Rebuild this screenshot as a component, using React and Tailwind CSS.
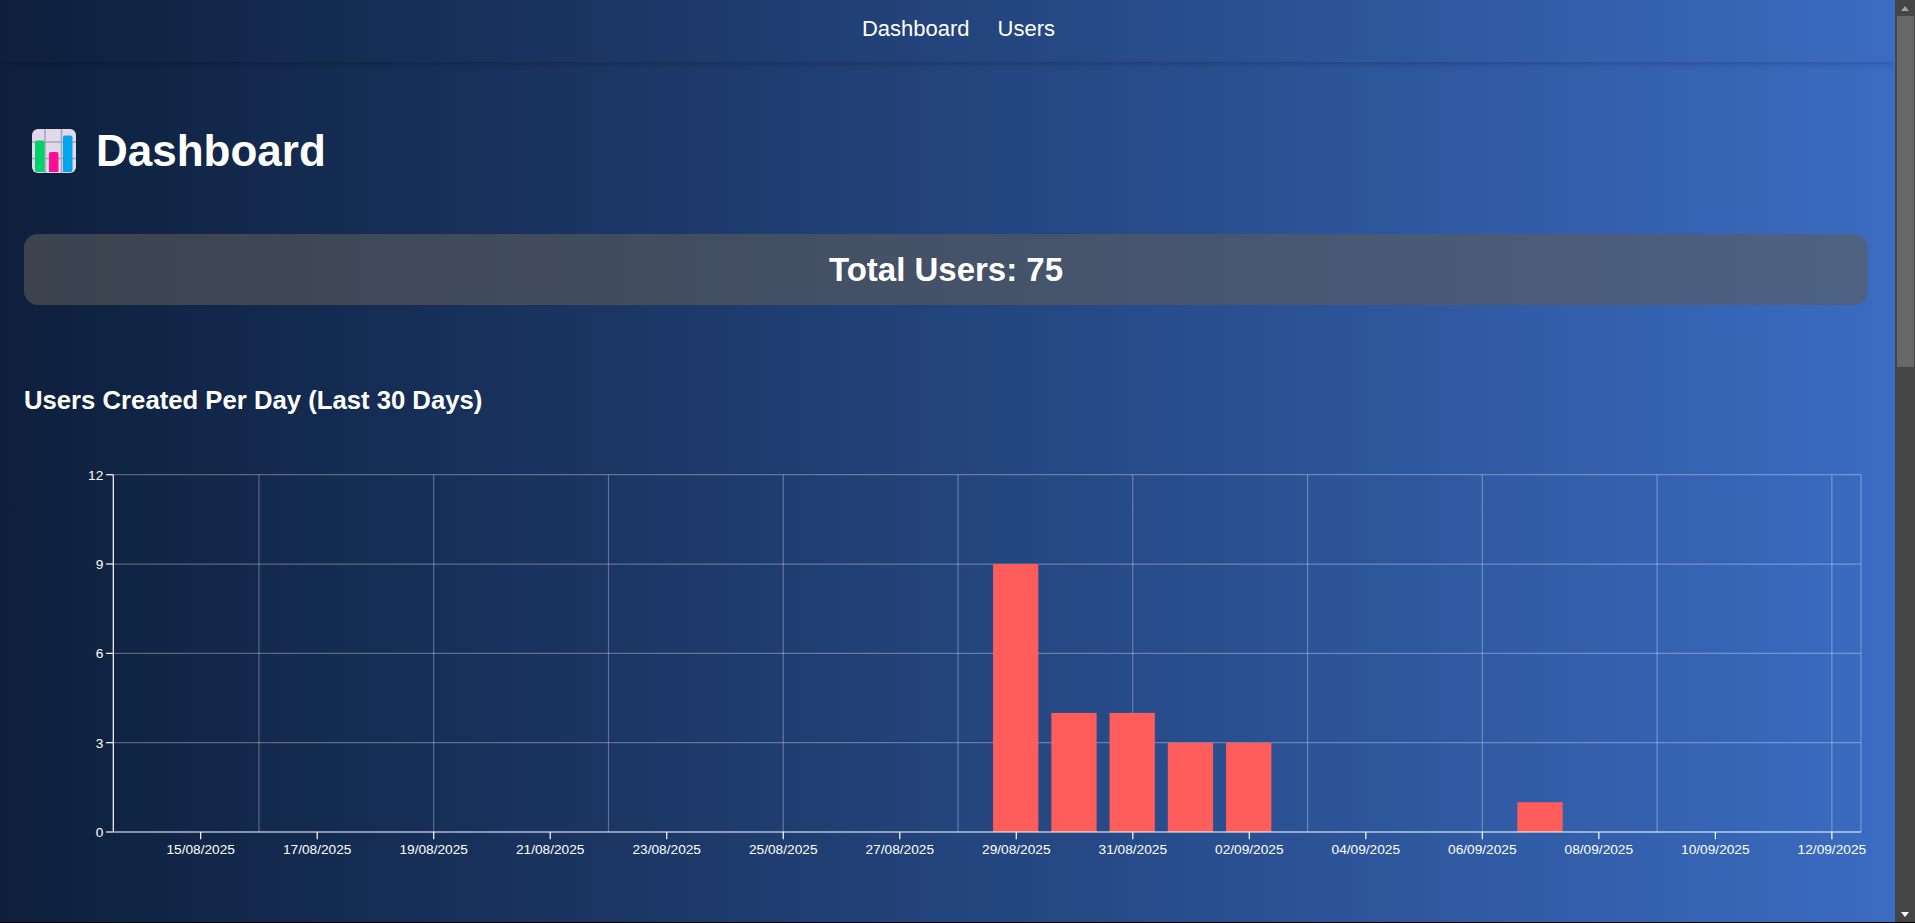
import React from "react";

const LEFT = 113.3;
const RIGHT = 1861;
const TOP = 7.7;
const BOTTOM = 365;
const BAND = (RIGHT - LEFT) / 30;
const ROW = (BOTTOM - TOP) / 4;

const dates = [
  "15/08/2025", "17/08/2025", "19/08/2025", "21/08/2025", "23/08/2025", "25/08/2025", "27/08/2025", "29/08/2025",
  "31/08/2025", "02/09/2025", "04/09/2025", "06/09/2025", "08/09/2025", "10/09/2025", "12/09/2025",
];

const bars = [
  { band: 15, value: 9 },
  { band: 16, value: 4 },
  { band: 17, value: 4 },
  { band: 18, value: 3 },
  { band: 19, value: 3 },
  { band: 24, value: 1 },
];

const gridX = [2, 5, 8, 11, 14, 17, 20, 23, 26, 29];

const ChartIcon = () => (
  <svg width="44" height="44" viewBox="0 0 44 44" className="shrink-0">
    <rect x="0" y="0" width="44" height="44" rx="6" fill="#e1d8ec" />
    <path d="M13 0V44M29.5 0V44M0 13H44M0 29.5H44" stroke="#a9a3b6" strokeWidth="1.6" />
    <path d="M3 13.5a2 2 0 0 1 2-2h5.5a2 2 0 0 1 2 2V43H5a2 2 0 0 1-2-2z" fill="#00d26a" />
    <path d="M17 25a2 2 0 0 1 2-2h5.5a2 2 0 0 1 2 2V43H17z" fill="#ff0e93" />
    <path d="M31 8.500a2 2 0 0 1 2-2h5.500a2 2 0 0 1 2 2V41a2 2 0 0 1-2 2H31z" fill="#00a6ed" />
  </svg>
);

const UsersChart = () => (
  <svg width="1895" height="440" className="block" fontFamily="'Liberation Sans', Arial, sans-serif">
    {/* grid */}
    <g stroke="#ffffff" strokeOpacity="0.3" strokeWidth="1.2">
      {[0, 1, 2, 3].map((i) => (
        <line key={i} x1={LEFT} x2={RIGHT} y1={TOP + ROW * i} y2={TOP + ROW * i} />
      ))}
      {gridX.map((i) => (
        <line key={i} x1={LEFT + BAND * (i + 0.5)} x2={LEFT + BAND * (i + 0.5)} y1={TOP} y2={BOTTOM} />
      ))}
      <line x1={RIGHT} x2={RIGHT} y1={TOP} y2={BOTTOM} />
    </g>

    {/* bars */}
    {bars.map((b) => (
      <rect
        key={b.band}
        x={LEFT + BAND * b.band + 5.9}
        y={BOTTOM - (ROW / 3) * b.value}
        width={45.3}
        height={(ROW / 3) * b.value}
        fill="#ff5c5c"
      />
    ))}

    {/* axes */}
    <g stroke="#ffffff" strokeWidth="1.2">
      <line x1={LEFT} x2={LEFT} y1={TOP} y2={BOTTOM} />
      <line x1={LEFT} x2={RIGHT} y1={BOTTOM} y2={BOTTOM} />
      {[12, 9, 6, 3, 0].map((v, i) => (
        <line key={v} x1={LEFT - 7.2} x2={LEFT} y1={TOP + ROW * i} y2={TOP + ROW * i} />
      ))}
      {dates.map((d, i) => {
        const x = LEFT + BAND * (1.5 + i * 2);
        return <line key={d} x1={x} x2={x} y1={BOTTOM} y2={BOTTOM + 7.2} />;
      })}
    </g>

    <g fill="#ffffff" fontSize="13.7">
      {[12, 9, 6, 3, 0].map((v, i) => (
        <text key={v} x={LEFT - 10} y={TOP + ROW * i + 5} textAnchor="end">
          {v}
        </text>
      ))}
      {dates.map((d, i) => (
        <text key={d} x={LEFT + BAND * (1.5 + i * 2)} y={BOTTOM + 21.5} textAnchor="middle">
          {d}
        </text>
      ))}
    </g>
  </svg>
);

const Scrollbar = () => (
  <div className="w-5 shrink-0 bg-[#454545] flex flex-col items-center">
    <div className="h-4 w-full flex items-center justify-center">
      <div className="w-0 h-0 border-x-[4.5px] border-x-transparent border-b-[5px] border-b-[#a3a3a3]" />
    </div>
    <div className="h-[351px] w-[17px] ml-px bg-[#686868]" />
    <div className="flex-1" />
    <div className="h-4 w-full flex items-center justify-center">
      <div className="w-0 h-0 border-x-[4.5px] border-x-transparent border-t-[5px] border-t-[#ffffff]" />
    </div>
  </div>
);

export default function App() {
  return (
    <div className="h-[923px] overflow-hidden bg-black font-['Liberation_Sans',Arial,sans-serif] text-white">
      <div className="h-[922px] flex overflow-hidden">
        <main className="flex-1 min-w-0 bg-gradient-to-r from-[#0d1f3c] to-[#3b6cc2]">
          <nav className="h-[62px] flex items-center justify-center gap-7 pl-[22px] text-[22px] pb-[6px] shadow-[0_2px_6px_rgba(0,0,0,0.2)]">
            <a>Dashboard</a>
            <a>Users</a>
          </nav>

          <div className="pl-6 pr-[27px]">
            <h1 className="mt-[66px] h-[46px] flex items-center gap-[20px] pl-2 text-[44px] font-bold leading-none">
              <ChartIcon />
              <span>Dashboard</span>
            </h1>

            <div className="mt-[60px] h-[71px] rounded-[14px] bg-[#5b5b5b99] flex items-center justify-center text-[33px] font-bold">
              Total Users: 75
            </div>

            <h2 className="mt-[77px] h-[36px] flex items-center text-[25.7px] font-bold">
              Users Created Per Day (Last 30 Days)
            </h2>
          </div>

          <div className="mt-[49px]">
            <UsersChart />
          </div>
        </main>
        <Scrollbar />
      </div>
    </div>
  );
}
